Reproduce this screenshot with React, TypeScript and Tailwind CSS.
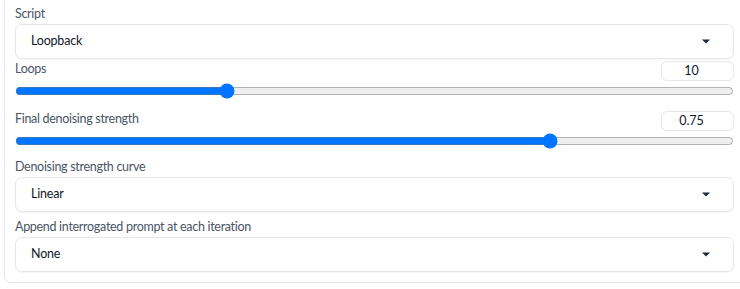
import React from 'react';

const font = { fontFamily: '"Source Sans Pro", Lato, "Noto Sans", sans-serif' };

const Caret = () => (
  <svg width="8" height="5" viewBox="0 0 8 5" className="text-gray-800">
    <path d="M0 0.5h8L4 4.5z" fill="currentColor" />
  </svg>
);

const Dropdown = ({ label, value }: { label: string; value: string }) => (
  <div className="flex flex-col">
    <span className="text-[12.5px] tracking-[-0.3px] leading-[18px] text-gray-600">{label}</span>
    <div className="mt-[1px] h-[35px] rounded-[7px] border border-gray-200 bg-white shadow-[0_1px_1px_rgba(0,0,0,0.04)] flex items-center justify-between pl-[15px] pr-[23px]">
      <span className="text-[12.5px] tracking-[-0.2px] text-gray-900">{value}</span>
      <Caret />
    </div>
  </div>
);

const Slider = ({
  label,
  value,
  min,
  max,
  step,
}: {
  label: string;
  value: number;
  min: number;
  max: number;
  step: number;
}) => (
  <div className="flex flex-col">
    <div className="flex items-start justify-between h-[22px]">
      <span className="mt-[1px] text-[12.5px] tracking-[-0.3px] leading-[18px] text-gray-600">{label}</span>
      <div className="mt-[2px] w-[73px] h-[20px] rounded-[6px] border border-gray-200 bg-white flex items-center justify-center pr-[12px] text-[12.5px] text-gray-900">
        {value}
      </div>
    </div>
    <input
      type="range"
      min={min}
      max={max}
      step={step}
      defaultValue={value}
      className="w-full mt-[2px] m-0 h-[16px]"
    />
  </div>
);

export default function App() {
  return (
    <div className="bg-white w-[740px] h-[289px] overflow-hidden" style={font}>
      <div className="ml-[4px] mt-[-8px] w-[760px] border border-gray-200 rounded-[7px] pl-[10px] pr-[30px] pt-[12px] pb-[10px] flex flex-col">
        <div className="w-[719px] flex flex-col">
          <Dropdown label="Script" value="Loopback" />
          <Slider label="Loops" value={10} min={1} max={32} step={1} />
          <div className="mt-[10px]">
            <Slider label="Final denoising strength" value={0.75} min={0} max={1} step={0.01} />
          </div>
          <div className="mt-[9px]">
            <Dropdown label="Denoising strength curve" value="Linear" />
          </div>
          <div className="mt-[6px]">
            <Dropdown label="Append interrogated prompt at each iteration" value="None" />
          </div>
        </div>
      </div>
    </div>
  );
}
